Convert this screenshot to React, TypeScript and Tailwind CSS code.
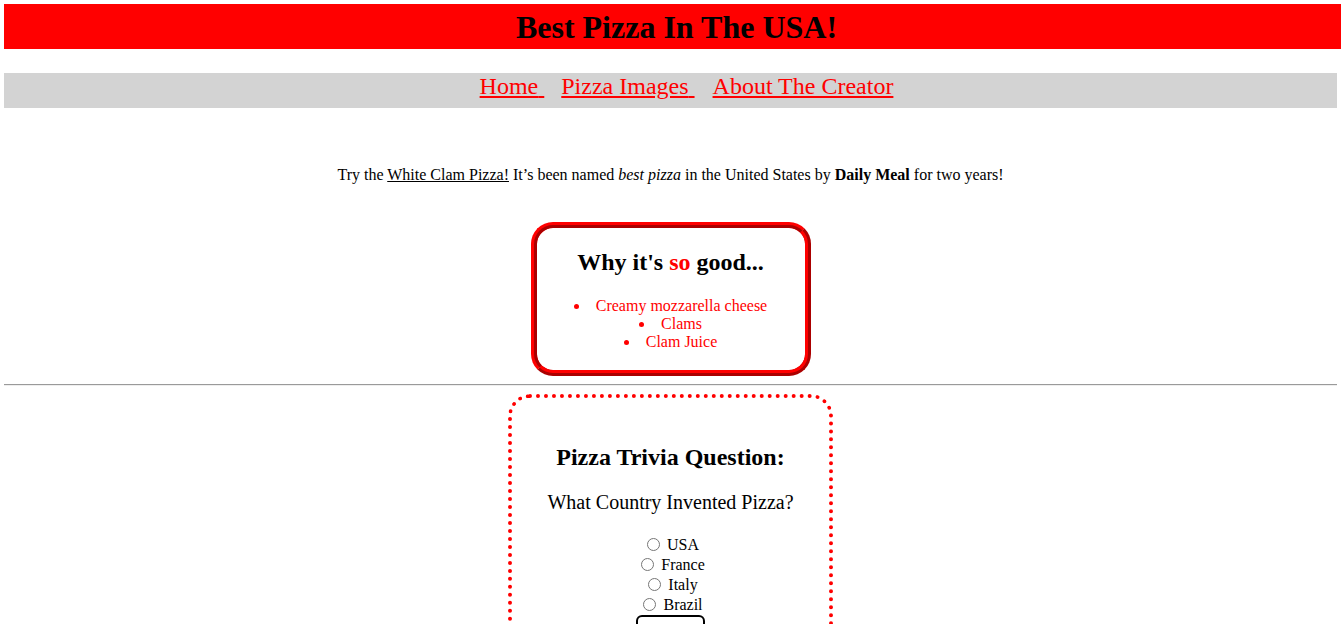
const App = () => {
  return (
    <div className="w-full overflow-hidden px-[4px] pt-[4px] bg-white text-black font-['Liberation_Serif',serif]">
      <div className="w-[1345px] h-[45px] bg-[#ff0000] flex items-center justify-center">
        <h1 className="text-[32px] font-bold leading-[36px]">Best Pizza In The USA!</h1>
      </div>

      <nav className="mt-[24px] h-[35px] bg-[#d3d3d3] text-center text-[24px] leading-[27px] pl-[32px]">
        <a href="#" className="text-[#ff0000] underline mr-[17px]">Home{"\u00a0"}</a>
        <a href="#" className="text-[#ff0000] underline mr-[18px]">Pizza Images{"\u00a0"}</a>
        <a href="#" className="text-[#ff0000] underline">About The Creator</a>
      </nav>

      <p className="mt-[58px] text-center text-[16px] leading-[18px]">
        Try the <a href="#" className="underline text-black">White Clam Pizza!</a> It’s been named{" "}
        <em>best pizza</em> in the United States by <strong>Daily Meal</strong> for two years!
      </p>

      <div className="flex justify-center mt-[38px]">
        <div className="w-[280px] h-[154px] border-[6px] [border-style:ridge] border-[#ff0000] rounded-[22px] pt-[20px] text-center">
          <h2 className="text-[24px] font-bold leading-[28px]">
            Why it's <span className="text-[#ff0000]">so</span> good...
          </h2>
          <ul className="mt-[21px] list-disc list-inside text-[#ff0000] text-[16px] leading-[18px]">
            <li>Creamy mozzarella cheese</li>
            <li>Clams</li>
            <li>Clam Juice</li>
          </ul>
        </div>
      </div>

      <hr className="mt-[8px] h-0 border-t border-t-[#9a9a9a] border-b border-b-[#eeeeee]" />

      <div className="flex justify-center mt-[8px]">
        <div className="w-[325px] border-4 border-dotted border-[#ff0000] rounded-[22px] pt-[45px] pb-[20px] text-center">
          <h2 className="text-[24px] font-bold leading-[28px]">Pizza Trivia Question:</h2>
          <p className="mt-[20px] text-[20px] leading-[23px]">What Country Invented Pizza?</p>
          <form className="mt-[21px] text-[16px] leading-[20px]">
            {["USA", "France", "Italy", "Brazil"].map((c) => (
              <div key={c}>
                <label>
                  <input type="radio" name="country" className="w-[13px] h-[13px] ml-[5px] mr-[3px] mt-[3px] align-[-1px]" />{" "}
                  {c}
                </label>
              </div>
            ))}
            <button
              type="button"
              className="block mx-auto w-[69px] h-[44px] border-2 border-black rounded-[6px] pt-[16px] text-[16px]"
            >
              Submit
            </button>
          </form>
        </div>
      </div>
    </div>
  );
};

export default App;
